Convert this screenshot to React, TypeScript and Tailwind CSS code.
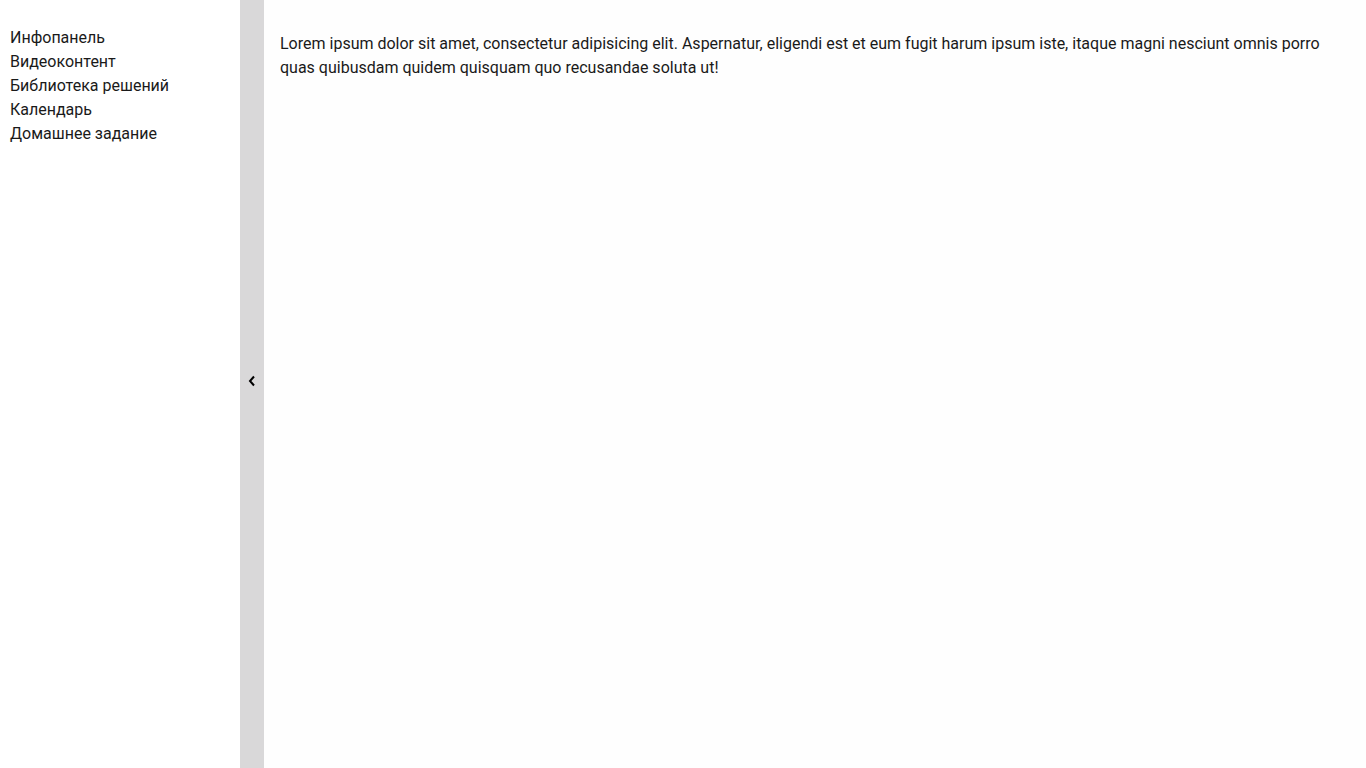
const links = ['Инфопанель', 'Видеоконтент', 'Библиотека решений', 'Календарь', 'Домашнее задание'];

export default function App() {
    return (
        <div className="flex h-[768px] w-full text-[#1a1a1a]" style={{ fontFamily: 'Roboto, sans-serif' }}>
            <aside className="w-[240px] shrink-0 bg-white px-[10px] pt-[26px]">
                <nav className="flex flex-col">
                    {links.map(l => (
                        <a key={l} href="#" className="text-base leading-6">{l}</a>
                    ))}
                </nav>
            </aside>
            <div className="flex w-[24px] shrink-0 items-center justify-center bg-[#d9d8d9] pb-[6px]">
                {/* collapse toggle */}
                <svg width="8" height="12" viewBox="0 0 8 12" fill="none">
                    <path d="M6 1.5 L2 6 L6 10.5" stroke="#000" strokeWidth="2" />
                </svg>
            </div>
            <main className="flex-1 bg-[#fefefe] px-4 pt-[32px]">
                <p className="text-base leading-6">
                    Lorem ipsum dolor sit amet, consectetur adipisicing elit. Aspernatur, eligendi est et eum fugit harum ipsum iste, itaque magni nesciunt omnis porro quas quibusdam quidem quisquam quo recusandae soluta ut!
                </p>
            </main>
        </div>
    );
}
